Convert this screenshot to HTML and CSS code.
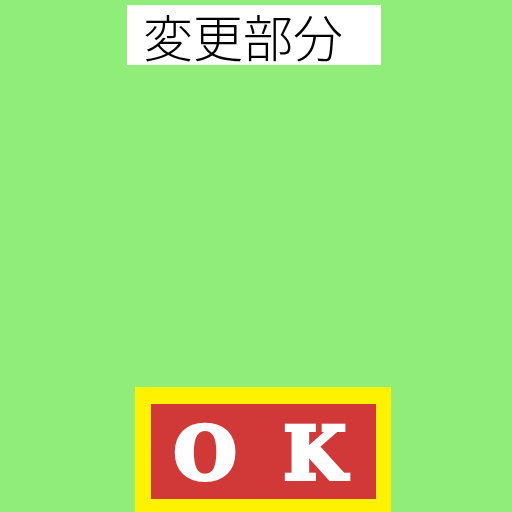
FILE: index.html
```html
<!DOCTYPE html>
<html>
<head>
<meta charset="utf-8">
<link rel="stylesheet" href="styles.css">
</head>
<body>
<div class="page">
  <div class="title">変更部分</div>
  <div class="ok-frame">
    <div class="ok-button">O K</div>
  </div>
</div>
</body>
</html>
```
FILE: styles.css
```css
html, body {
  margin: 0;
  padding: 0;
  background: #90ed7a;
}
.page {
  width: 512px;
  height: 512px;
  overflow: hidden;
  display: flex;
  flex-direction: column;
}
.title {
  margin: 5px 0 0 127px;
  width: 254px;
  height: 60px;
  box-sizing: border-box;
  padding-left: 16px;
  background: #ffffff;
  color: #000;
  font-family: "Noto Sans CJK JP", sans-serif;
  font-weight: 300;
  font-size: 50px;
  line-height: 60px;
  white-space: nowrap;
}
.ok-frame {
  margin: 322px 0 0 135px;
  width: 256px;
  box-sizing: border-box;
  padding: 17px 15px 14px 16px;
  background: #fff200;
}
.ok-button {
  height: 95px;
  background: #d13838;
  color: #ffffff;
  -webkit-text-stroke: 4px #ffffff;
  font-family: "DejaVu Serif", serif;
  font-weight: 900;
  font-size: 72px;
  line-height: 100px;
  text-align: center;
  letter-spacing: 11px;
  text-indent: 4px;
  white-space: pre;
}
```
